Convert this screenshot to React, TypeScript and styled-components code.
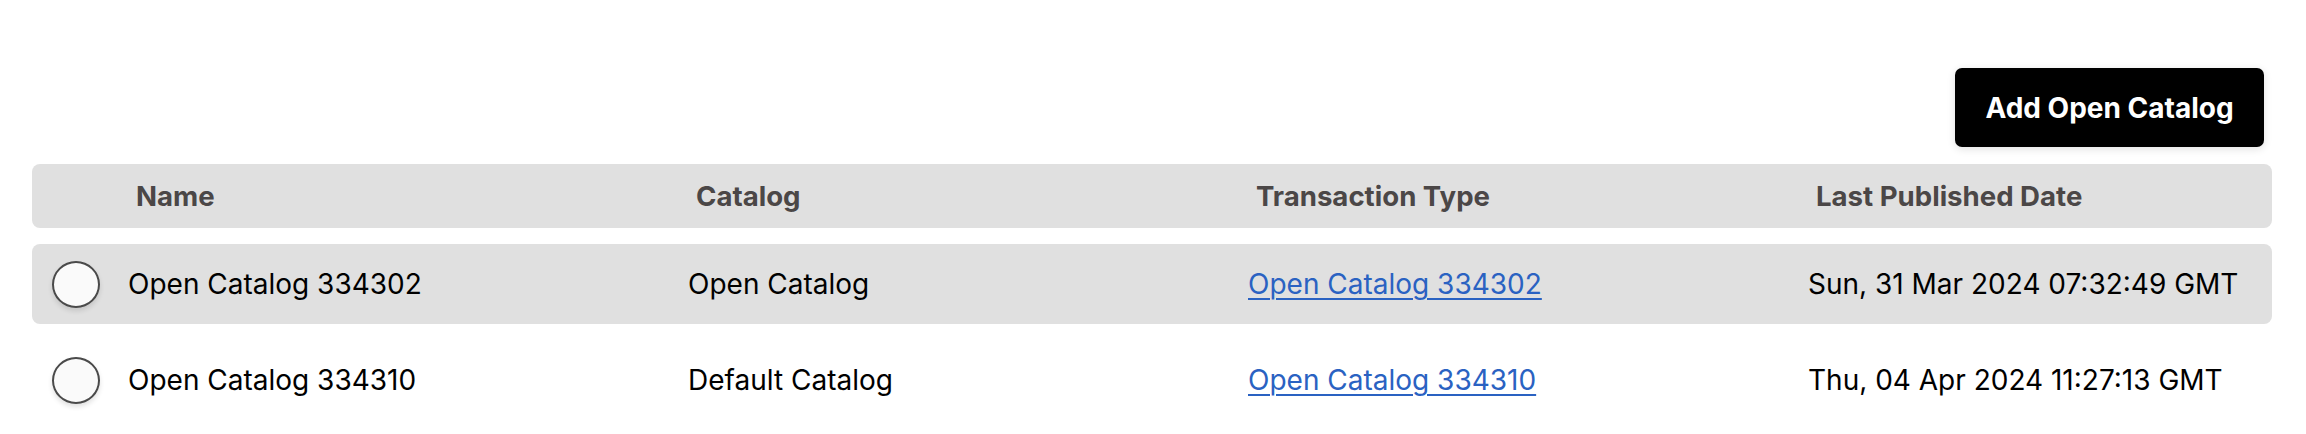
import React from "react";
import styled, { createGlobalStyle } from "styled-components";

const Global = createGlobalStyle`
  html, body { margin: 0; padding: 0; background: #ffffff; }
  body { font-family: Inter, "Noto Sans", sans-serif; color: #000; }
`;

const Page = styled.div`
  padding: 68px 34px 0 32px;
  display: flex;
  flex-direction: column;
`;

const Toolbar = styled.div`
  display: flex;
  justify-content: flex-end;
  padding-right: 8px;
  margin-bottom: 17px;
`;

const PrimaryButton = styled.button`
  height: 79px;
  width: 309px;
  border: none;
  border-radius: 7px;
  background: #000;
  color: #fff;
  font-family: Inter, sans-serif;
  font-weight: 700;
  font-size: 28px;
  box-shadow: 0 2px 8px rgba(0, 0, 0, 0.12);
  cursor: pointer;
`;

const Table = styled.div`
  display: flex;
  flex-direction: column;
  gap: 16px;
`;

const Row = styled.div<{ $shaded?: boolean; $height: number }>`
  display: grid;
  grid-template-columns: repeat(4, 1fr);
  align-items: center;
  height: ${(p) => p.$height}px;
  border-radius: 8px;
  background: ${(p) => (p.$shaded ? "#e0e0e0" : "transparent")};
`;

const HeadCell = styled.div`
  padding-left: 104px;
  font-size: 27.6px;
  font-weight: 700;
  color: #4b4747;
  white-space: nowrap;
`;

const Cell = styled.div`
  padding-left: 96px;
  font-size: 28px;
  color: #000;
  white-space: nowrap;
`;

const NameCell = styled.div`
  display: flex;
  align-items: center;
  gap: 28px;
  padding-left: 20px;
  font-size: 28px;
  white-space: nowrap;
`;

const Radio = styled.span`
  box-sizing: border-box;
  width: 48px;
  height: 47px;
  border-radius: 50%;
  border: 2px solid #4a4a4a;
  background: #fafafa;
  box-shadow: 0 3px 5px rgba(0, 0, 0, 0.12);
  flex: none;
`;

const Link = styled.a`
  color: #2a62c2;
  text-decoration: underline;
  text-underline-offset: 4px;
  text-decoration-thickness: 2px;
`;

const rows = [
  {
    name: "Open Catalog 334302",
    catalog: "Open Catalog",
    tx: "Open Catalog 334302",
    date: "Sun, 31 Mar 2024 07:32:49 GMT",
  },
  {
    name: "Open Catalog 334310",
    catalog: "Default Catalog",
    tx: "Open Catalog 334310",
    date: "Thu, 04 Apr 2024 11:27:13 GMT",
  },
];

export default function App() {
  return (
    <>
      <Global />
      <Page>
        <Toolbar>
          <PrimaryButton>Add Open Catalog</PrimaryButton>
        </Toolbar>
        <Table>
          <Row $shaded $height={64}>
            <HeadCell>Name</HeadCell>
            <HeadCell>Catalog</HeadCell>
            <HeadCell>Transaction Type</HeadCell>
            <HeadCell>Last Published Date</HeadCell>
          </Row>
          {rows.map((r, i) => (
            <Row key={r.name} $shaded={i === 0} $height={80}>
              <NameCell>
                <Radio />
                {r.name}
              </NameCell>
              <Cell>{r.catalog}</Cell>
              <Cell>
                <Link href="#">{r.tx}</Link>
              </Cell>
              <Cell>{r.date}</Cell>
            </Row>
          ))}
        </Table>
      </Page>
    </>
  );
}
